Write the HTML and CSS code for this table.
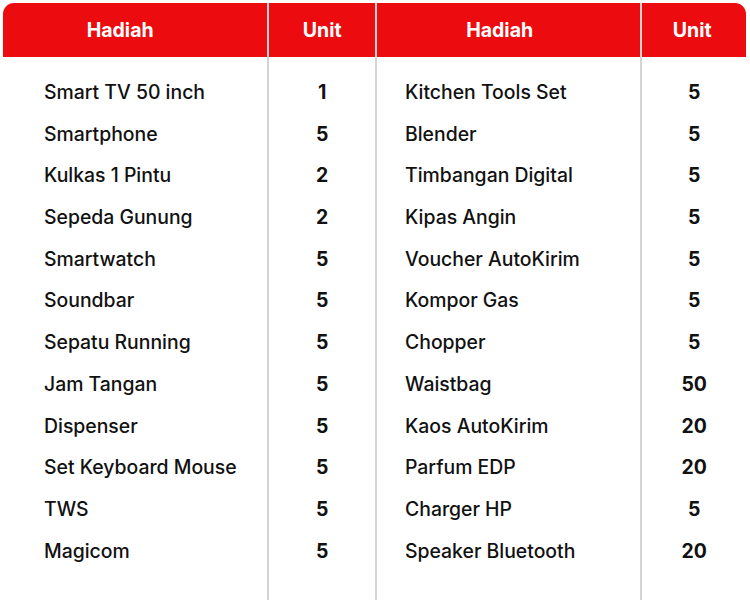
FILE: index.html
```html
<!DOCTYPE html>
<html lang="id">
<head>
<meta charset="utf-8">
<link rel="stylesheet" href="styles.css">
</head>
<body>
<div class="board">
  <div class="col col-name col-a">
    <div class="head">Hadiah</div>
    <ul class="list">
      <li>Smart TV 50 inch</li>
      <li>Smartphone</li>
      <li>Kulkas 1 Pintu</li>
      <li>Sepeda Gunung</li>
      <li>Smartwatch</li>
      <li>Soundbar</li>
      <li>Sepatu Running</li>
      <li>Jam Tangan</li>
      <li>Dispenser</li>
      <li>Set Keyboard Mouse</li>
      <li>TWS</li>
      <li>Magicom</li>
    </ul>
  </div>
  <div class="col col-unit col-b">
    <div class="head">Unit</div>
    <ul class="list">
      <li>1</li><li>5</li><li>2</li><li>2</li><li>5</li><li>5</li>
      <li>5</li><li>5</li><li>5</li><li>5</li><li>5</li><li>5</li>
    </ul>
  </div>
  <div class="col col-name col-c">
    <div class="head">Hadiah</div>
    <ul class="list">
      <li>Kitchen Tools Set</li>
      <li>Blender</li>
      <li>Timbangan Digital</li>
      <li>Kipas Angin</li>
      <li>Voucher AutoKirim</li>
      <li>Kompor Gas</li>
      <li>Chopper</li>
      <li>Waistbag</li>
      <li>Kaos AutoKirim</li>
      <li>Parfum EDP</li>
      <li>Charger HP</li>
      <li>Speaker Bluetooth</li>
    </ul>
  </div>
  <div class="col col-unit col-d">
    <div class="head">Unit</div>
    <ul class="list">
      <li>5</li><li>5</li><li>5</li><li>5</li><li>5</li><li>5</li>
      <li>5</li><li>50</li><li>20</li><li>20</li><li>5</li><li>20</li>
    </ul>
  </div>
</div>
</body>
</html>
```

FILE: styles.css
```css
html, body {
  margin: 0;
  padding: 0;
  background: #ffffff;
  overflow: hidden;
}
body {
  font-family: "Inter", "Liberation Sans", sans-serif;
  color: #111111;
}
.board {
  display: flex;
  margin: 3px 0 0 3px;
  width: 743px;
  height: 620px;
  border-radius: 11px 11px 0 0;
  overflow: hidden;
}
.col {
  display: flex;
  flex-direction: column;
}
.col-a { width: 265px; }
.col-b { width: 106px; border-left: 2px solid #d4d4d4; }
.col-c { width: 264px; border-left: 2px solid #d4d4d4; }
.col-d { width: 104px; border-left: 2px solid #d4d4d4; }
.head {
  height: 54px;
  background: #ec0c10;
  color: #ffffff;
  font-weight: 700;
  font-size: 19.5px;
  display: flex;
  align-items: center;
  justify-content: center;
}
.col-a .head { padding-right: 30px; }
.col-c .head { padding-right: 18px; }
.col-d .head { padding-right: 4px; }
.list {
  list-style: none;
  margin: 0;
  padding: 15px 0 0 0;
}
.list li {
  height: 41.7px;
  line-height: 41.7px;
  font-size: 19.4px;
  font-weight: 500;
  white-space: nowrap;
}
.col-a .list li { padding-left: 41px; }
.col-c .list li { padding-left: 28px; }
.col-unit .list li {
  text-align: center;
  font-weight: 700;
}
```
